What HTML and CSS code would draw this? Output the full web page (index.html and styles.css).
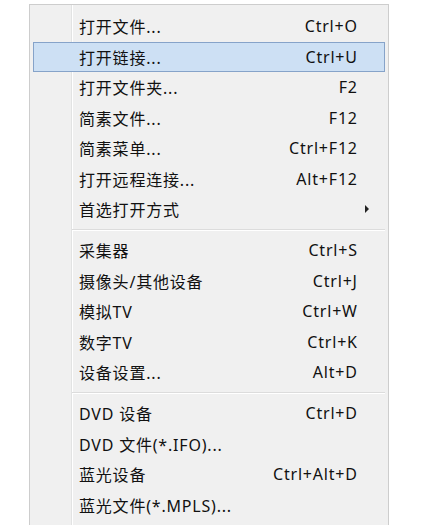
FILE: index.html
```html
<!doctype html>
<html lang="zh-CN">
<head>
  <meta charset="utf-8">
  <title>打开菜单</title>
  <link rel="stylesheet" href="styles.css">
</head>
<body>

<div class="menu">
  <div class="item"><span class="label">打开文件...</span><span class="key">Ctrl+O</span><span class="sub"></span></div>
  <div class="item active"><span class="label">打开链接...</span><span class="key">Ctrl+U</span><span class="sub"></span></div>
  <div class="item"><span class="label">打开文件夹...</span><span class="key">F2</span><span class="sub"></span></div>
  <div class="item"><span class="label">简素文件...</span><span class="key">F12</span><span class="sub"></span></div>
  <div class="item"><span class="label">简素菜单...</span><span class="key">Ctrl+F12</span><span class="sub"></span></div>
  <div class="item"><span class="label">打开远程连接...</span><span class="key">Alt+F12</span><span class="sub"></span></div>
  <div class="item"><span class="label">首选打开方式</span><span class="key"></span><span class="sub arrow"></span></div>
  <div class="sep"></div>
  <div class="item"><span class="label">采集器</span><span class="key">Ctrl+S</span><span class="sub"></span></div>
  <div class="item"><span class="label">摄像头/其他设备</span><span class="key">Ctrl+J</span><span class="sub"></span></div>
  <div class="item"><span class="label">模拟TV</span><span class="key">Ctrl+W</span><span class="sub"></span></div>
  <div class="item"><span class="label">数字TV</span><span class="key">Ctrl+K</span><span class="sub"></span></div>
  <div class="item"><span class="label">设备设置...</span><span class="key">Alt+D</span><span class="sub"></span></div>
  <div class="sep"></div>
  <div class="item"><span class="label">DVD 设备</span><span class="key">Ctrl+D</span><span class="sub"></span></div>
  <div class="item"><span class="label">DVD 文件(*.IFO)...</span><span class="key"></span><span class="sub"></span></div>
  <div class="item"><span class="label">蓝光设备</span><span class="key">Ctrl+Alt+D</span><span class="sub"></span></div>
  <div class="item"><span class="label">蓝光文件(*.MPLS)...</span><span class="key"></span><span class="sub"></span></div>
</div>

</body>
</html>
```

FILE: styles.css
```css
:root {
  --menu-bg: #f0f0f0;
  --menu-border: #cdcdcd;
  --gutter-line: #e2e3e3;
  --text-color: #111;
  --hover-bg: #cde0f4;
  --hover-border: #86a3c9;
}
html,
body {
  margin: 0;
  background: #fff;
}
body {
  font-family: "Noto Sans", "Noto Sans CJK SC", sans-serif;
  font-size: 16px;
  color: var(--text-color);
}
.menu {
  width: 352px;
  margin: 4px 0 0 29px;
  padding: 6px 3px;
  border: 1px solid var(--menu-border);
  background:
    linear-gradient(to right,
      transparent 41px,
      var(--gutter-line) 41px, var(--gutter-line) 42px,
      #fff 42px, #fff 43px,
      transparent 43px),
    var(--menu-bg);
}
.item {
  display: flex;
  align-items: center;
  height: 30.5px;
  padding: 0 15px 0 45px;
  box-sizing: border-box;
  letter-spacing: 0.8px;
  border: 1px solid transparent;
}
.item.active {
  background: var(--hover-bg);
  border-color: var(--hover-border);
}
.label {
  flex: 1;
  white-space: nowrap;
}
.key {
  white-space: nowrap;
  margin-right: -0.8px;
}
.sub {
  width: 12px;
  display: flex;
  justify-content: flex-end;
}
.arrow::before {
  content: "";
  border-left: 4px solid #222;
  border-top: 4px solid transparent;
  border-bottom: 4px solid transparent;
}
.sep {
  height: 10.5px;
  display: flex;
  align-items: center;
  padding-left: 39px;
}
.sep::before {
  content: "";
  flex: 1;
  height: 1px;
  border-bottom: 1px solid #fff;
  background: #dcdcdc;
}
```
